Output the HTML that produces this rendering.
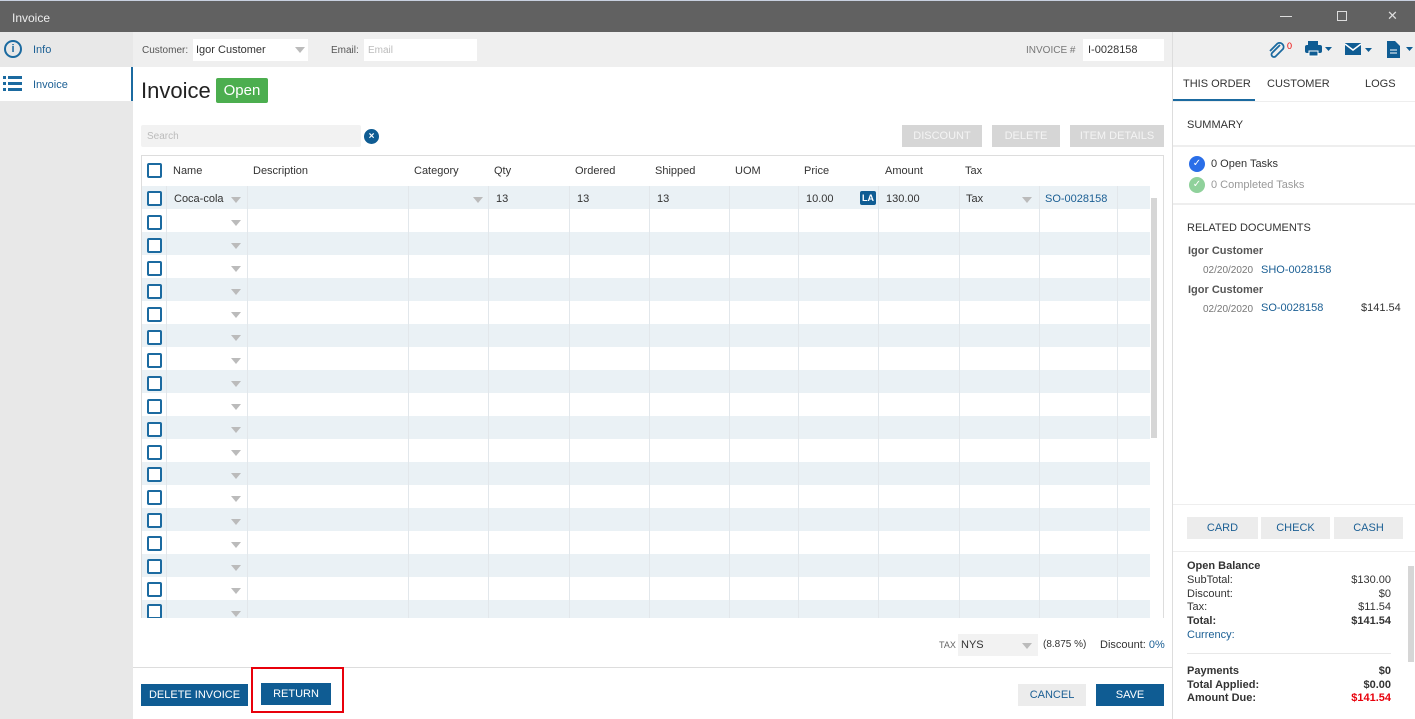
<!DOCTYPE html>
<html><head><meta charset="utf-8"><style>
*{box-sizing:border-box;margin:0;padding:0}
body{width:1415px;height:719px;overflow:hidden;font-family:"Liberation Sans",sans-serif;font-size:11px;color:#333;background:#fff;position:relative}
.a{position:absolute}
.title{left:0;top:0;width:1415px;height:32px;background:#616161;color:#eee;font-size:12px;padding:10px 12px;border-top:1px solid #c8d0e0}
.side{left:0;top:32px;width:133px;height:687px;background:#e8e8e8}
.blue{color:#1b5f94}
.btn{position:absolute;height:22px;text-align:center;line-height:22px;font-size:11px}
.gb{background:#d6d6d6;color:#f4f4f4}
.db{background:#0f5c93;color:#fff}
.lb{background:#ececec;color:#1b5f94}
.cb{position:absolute;left:5px;width:15px;height:15px;border:2px solid #1b6aa0;border-radius:2px;background:#fff}
.dd{position:absolute;width:0;height:0;border-left:5px solid transparent;border-right:5px solid transparent;border-top:6px solid #bbb}
.vl{position:absolute;top:30px;bottom:0;width:1px;background:#e2e7eb}
.hd{position:absolute;top:9px;font-size:11px;color:#333}
</style></head><body>
<div class="a title">Invoice</div>
<div class="a" style="left:1280px;top:16px;width:12px;height:1px;background:#ddd"></div>
<div class="a" style="left:1337px;top:11px;width:10px;height:10px;border:1px solid #ddd"></div>
<div class="a" style="left:1387px;top:8px;color:#ddd;font-size:13px">✕</div>

<div class="a side"></div>
<div class="a" style="left:0;top:67px;width:133px;height:34px;background:#fff;border-right:2px solid #1b6aa0"></div>
<div class="a" style="left:4px;top:40px;width:18px;height:18px;border:2px solid #1b6aa0;border-radius:50%;color:#1b6aa0;font-size:11px;font-weight:bold;text-align:center;line-height:14px">i</div>
<div class="a blue" style="left:33px;top:44px;font-size:11px">Info</div>
<svg class="a" style="left:3px;top:75px" width="20" height="18"><g fill="#1b6aa0"><rect x="0" y="1" width="3" height="3"/><rect x="5" y="1" width="14" height="3"/><rect x="0" y="7" width="3" height="3"/><rect x="5" y="7" width="14" height="3"/><rect x="0" y="13" width="3" height="3"/><rect x="5" y="13" width="14" height="3"/></g></svg>
<div class="a blue" style="left:33px;top:79px;font-size:11px">Invoice</div>

<div class="a" style="left:133px;top:32px;width:1039px;height:35px;background:#efefef"></div>
<div class="a" style="left:142px;top:45px;color:#555;font-size:10px">Customer:</div>
<div class="a" style="left:193px;top:39px;width:115px;height:22px;background:#fff;padding:5px 3px;font-size:11px">Igor Customer</div>
<div class="dd" style="left:295px;top:47px"></div>
<div class="a" style="left:331px;top:45px;color:#555;font-size:10px">Email:</div>
<div class="a" style="left:364px;top:39px;width:113px;height:22px;background:#fff;padding:6px 4px;color:#bbb;font-size:10px">Email</div>
<div class="a" style="left:1026px;top:45px;color:#777;font-size:10px">INVOICE #</div>
<div class="a" style="left:1083px;top:39px;width:81px;height:22px;background:#fff;padding:5px 5px;font-size:11px">I-0028158</div>

<div class="a" style="left:141px;top:78px;font-size:22px;color:#222">Invoice</div>
<div class="a" style="left:216px;top:78px;width:52px;height:25px;background:#4cae4f;color:#fff;font-size:15px;text-align:center;line-height:25px;border-radius:2px">Open</div>

<div class="a" style="left:141px;top:125px;width:220px;height:22px;background:#f2f2f2;border-radius:2px;padding:6px 6px;color:#bbb;font-size:10px">Search</div>
<div class="a" style="left:364px;top:129px;width:15px;height:15px;border-radius:50%;background:#0f5c93;color:#fff;font-size:10px;text-align:center;line-height:15px;font-weight:bold">×</div>
<div class="btn gb" style="left:902px;top:125px;width:80px">DISCOUNT</div>
<div class="btn gb" style="left:992px;top:125px;width:68px">DELETE</div>
<div class="btn gb" style="left:1070px;top:125px;width:94px">ITEM DETAILS</div>

<div class="a" style="left:141px;top:155px;width:1023px;height:463px;border:1px solid #ddd;border-bottom:none;overflow:hidden">
 <div class="a" style="left:0;top:30px;width:1008px;height:440px;background:repeating-linear-gradient(#eaf1f5 0 23px,#fff 23px 46px)"></div>
 <div class="vl" style="left:24px"></div><div class="vl" style="left:105px"></div><div class="vl" style="left:266px"></div><div class="vl" style="left:346px"></div><div class="vl" style="left:427px"></div><div class="vl" style="left:507px"></div><div class="vl" style="left:587px"></div><div class="vl" style="left:656px"></div><div class="vl" style="left:736px"></div><div class="vl" style="left:817px"></div><div class="vl" style="left:897px"></div><div class="vl" style="left:975px"></div>
 <div class="a" style="left:1009px;top:42px;width:6px;height:240px;background:#d6d6d6"></div>
 <div class="cb" style="top:7px"></div>
 <div class="hd" style="left:31px">Name</div><div class="hd" style="left:111px">Description</div><div class="hd" style="left:272px">Category</div><div class="hd" style="left:352px">Qty</div><div class="hd" style="left:433px">Ordered</div><div class="hd" style="left:513px">Shipped</div><div class="hd" style="left:593px">UOM</div><div class="hd" style="left:662px">Price</div><div class="hd" style="left:743px">Amount</div><div class="hd" style="left:823px">Tax</div>
 <div class="a" style="left:32px;top:37px">Coca-cola</div>
 <div class="dd" style="left:331px;top:41px"></div>
 <div class="a" style="left:354px;top:37px">13</div><div class="a" style="left:435px;top:37px">13</div><div class="a" style="left:515px;top:37px">13</div>
 <div class="a" style="left:664px;top:37px">10.00</div>
 <div class="a" style="left:718px;top:35px;width:16px;height:14px;background:#0f5c93;color:#fff;font-size:9px;font-weight:bold;text-align:center;line-height:14px;border-radius:2px">LA</div>
 <div class="a" style="left:744px;top:37px">130.00</div>
 <div class="a" style="left:824px;top:37px">Tax</div><div class="dd" style="left:880px;top:41px"></div>
 <div class="a blue" style="left:903px;top:37px">SO-0028158</div>
 <div class="cb" style="top:35px"></div><div class="dd" style="left:89px;top:41px"></div>
 <div class="cb" style="top:59px"></div><div class="dd" style="left:89px;top:64px"></div>
 <div class="cb" style="top:82px"></div><div class="dd" style="left:89px;top:87px"></div>
 <div class="cb" style="top:105px"></div><div class="dd" style="left:89px;top:110px"></div>
 <div class="cb" style="top:128px"></div><div class="dd" style="left:89px;top:133px"></div>
 <div class="cb" style="top:151px"></div><div class="dd" style="left:89px;top:156px"></div>
 <div class="cb" style="top:174px"></div><div class="dd" style="left:89px;top:179px"></div>
 <div class="cb" style="top:197px"></div><div class="dd" style="left:89px;top:202px"></div>
 <div class="cb" style="top:220px"></div><div class="dd" style="left:89px;top:225px"></div>
 <div class="cb" style="top:243px"></div><div class="dd" style="left:89px;top:248px"></div>
 <div class="cb" style="top:266px"></div><div class="dd" style="left:89px;top:271px"></div>
 <div class="cb" style="top:289px"></div><div class="dd" style="left:89px;top:294px"></div>
 <div class="cb" style="top:311px"></div><div class="dd" style="left:89px;top:317px"></div>
 <div class="cb" style="top:334px"></div><div class="dd" style="left:89px;top:340px"></div>
 <div class="cb" style="top:357px"></div><div class="dd" style="left:89px;top:363px"></div>
 <div class="cb" style="top:380px"></div><div class="dd" style="left:89px;top:386px"></div>
 <div class="cb" style="top:403px"></div><div class="dd" style="left:89px;top:409px"></div>
 <div class="cb" style="top:426px"></div><div class="dd" style="left:89px;top:432px"></div>
 <div class="cb" style="top:448px"></div><div class="dd" style="left:89px;top:455px"></div>
</div>

<div class="a" style="left:939px;top:640px;font-size:9px;color:#666">TAX</div>
<div class="a" style="left:958px;top:634px;width:80px;height:22px;background:#f2f2f2;padding:5px 3px">NYS</div>
<div class="dd" style="left:1022px;top:643px"></div>
<div class="a" style="left:1043px;top:639px;font-size:10px">(8.875 %)</div>
<div class="a" style="left:1100px;top:639px">Discount: <span class="blue">0%</span></div>
<div class="a" style="left:133px;top:667px;width:1039px;height:1px;background:#ddd"></div>
<div class="btn db" style="left:141px;top:684px;width:107px">DELETE INVOICE</div>
<div class="btn db" style="left:261px;top:683px;width:70px">RETURN</div>
<div class="a" style="left:251px;top:667px;width:93px;height:46px;border:2px solid #e8000b"></div>
<div class="btn lb" style="left:1018px;top:684px;width:68px">CANCEL</div>
<div class="btn db" style="left:1096px;top:684px;width:68px">SAVE</div>

<div class="a" style="left:1172px;top:32px;width:1px;height:687px;background:#ddd"></div>
<div class="a" style="left:1173px;top:32px;width:242px;height:35px;background:#efefef"></div>
<svg class="a" style="left:1266px;top:40px" width="20" height="20"><path d="M14 5 L6 13 a2.5 2.5 0 0 0 3.5 3.5 L17 9 a4 4 0 0 0 -5.5 -5.5 L4 11" fill="none" stroke="#1b6aa0" stroke-width="1.8"/></svg>
<div class="a" style="left:1287px;top:41px;color:#e00;font-size:9px">0</div>
<svg class="a" style="left:1304px;top:40px" width="30" height="18"><rect x="4" y="1" width="10" height="4" fill="#0f5c93"/><rect x="1" y="5" width="17" height="8" rx="2" fill="#0f5c93"/><rect x="5" y="11" width="9" height="5" fill="#0f5c93" stroke="#fff"/><path d="M21 7 h7 l-3.5 4z" fill="#0f5c93"/></svg>
<svg class="a" style="left:1344px;top:42px" width="30" height="16"><rect x="1" y="1" width="16" height="12" fill="#0f5c93"/><path d="M1 2 l8 6 l8 -6" fill="none" stroke="#fff" stroke-width="1.5"/><path d="M21 6 h7 l-3.5 4z" fill="#0f5c93"/></svg>
<svg class="a" style="left:1386px;top:40px" width="29" height="20"><path d="M1 1 h8 l5 5 v12 h-13z" fill="#0f5c93"/><path d="M4 10 h7 M4 13 h7" stroke="#fff"/><path d="M20 7 h7 l-3.5 4z" fill="#0f5c93"/></svg>

<div class="a" style="left:1183px;top:78px;font-size:11px;color:#333">THIS ORDER</div>
<div class="a" style="left:1267px;top:78px;font-size:11px;color:#333">CUSTOMER</div>
<div class="a" style="left:1365px;top:78px;font-size:11px;color:#333">LOGS</div>
<div class="a" style="left:1173px;top:99px;width:82px;height:2px;background:#1b6aa0"></div>
<div class="a" style="left:1173px;top:101px;width:242px;height:1px;background:#eee"></div>
<div class="a" style="left:1187px;top:119px;font-size:11px">SUMMARY</div>
<div class="a" style="left:1173px;top:145px;width:242px;height:2px;background:#eee"></div>
<div class="a" style="left:1189px;top:156px;width:16px;height:16px;border-radius:50%;background:#2a6ee8;color:#fff;font-size:10px;text-align:center;line-height:16px">✓</div>
<div class="a" style="left:1211px;top:158px">0 Open Tasks</div>
<div class="a" style="left:1189px;top:177px;width:16px;height:16px;border-radius:50%;background:#8fd19b;color:#fff;font-size:10px;text-align:center;line-height:16px">✓</div>
<div class="a" style="left:1211px;top:179px;color:#999">0 Completed Tasks</div>
<div class="a" style="left:1173px;top:203px;width:242px;height:2px;background:#eee"></div>
<div class="a" style="left:1187px;top:222px;font-size:11px">RELATED DOCUMENTS</div>
<div class="a" style="left:1188px;top:245px;font-weight:bold;color:#555">Igor Customer</div>
<div class="a" style="left:1203px;top:265px;font-size:10px;color:#777">02/20/2020</div>
<div class="a blue" style="left:1261px;top:264px;font-size:11px">SHO-0028158</div>
<div class="a" style="left:1188px;top:284px;font-weight:bold;color:#555">Igor Customer</div>
<div class="a" style="left:1203px;top:304px;font-size:10px;color:#777">02/20/2020</div>
<div class="a blue" style="left:1261px;top:302px;font-size:11px">SO-0028158</div>
<div class="a" style="left:1361px;top:302px">$141.54</div>

<div class="a" style="left:1173px;top:504px;width:242px;height:1px;background:#eee"></div>
<div class="btn lb" style="left:1187px;top:517px;width:71px">CARD</div>
<div class="btn lb" style="left:1261px;top:517px;width:69px">CHECK</div>
<div class="btn lb" style="left:1334px;top:517px;width:69px">CASH</div>
<div class="a" style="left:1173px;top:551px;width:242px;height:1px;background:#eee"></div>
<div class="a" style="left:1408px;top:566px;width:6px;height:96px;background:#d6d6d6"></div>
<div class="a" style="left:1187px;top:560px;width:204px;font-size:11px;line-height:13.8px">
<div style="font-weight:bold">Open Balance</div>
<div>SubTotal:<span style="float:right">$130.00</span></div>
<div>Discount:<span style="float:right">$0</span></div>
<div>Tax:<span style="float:right">$11.54</span></div>
<div style="font-weight:bold">Total:<span style="float:right">$141.54</span></div>
<div class="blue">Currency:</div>
<div style="height:1px;background:#e8e8e8;margin:10px 0 11px"></div>
<div style="font-weight:bold">Payments<span style="float:right">$0</span></div>
<div style="font-weight:bold">Total Applied:<span style="float:right">$0.00</span></div>
<div style="font-weight:bold">Amount Due:<span style="float:right;color:#e8000b">$141.54</span></div>
</div>
</body></html>
